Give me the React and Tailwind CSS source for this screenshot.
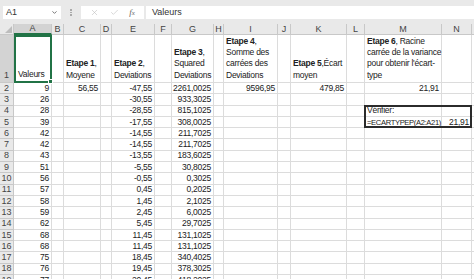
import { X, Check, ChevronDown } from "lucide-react";

const COLS = ["A", "B", "C", "D", "E", "F", "G", "H", "I", "J", "K", "L", "M", "N", ""];

const values = [
  ["9", "-47,55", "2261,0025"],
  ["26", "-30,55", "933,3025"],
  ["28", "-28,55", "815,1025"],
  ["39", "-17,55", "308,0025"],
  ["42", "-14,55", "211,7025"],
  ["42", "-14,55", "211,7025"],
  ["43", "-13,55", "183,6025"],
  ["51", "-5,55", "30,8025"],
  ["56", "-0,55", "0,3025"],
  ["57", "0,45", "0,2025"],
  ["58", "1,45", "2,1025"],
  ["59", "2,45", "6,0025"],
  ["62", "5,45", "29,7025"],
  ["68", "11,45", "131,1025"],
  ["68", "11,45", "131,1025"],
  ["75", "18,45", "340,4025"],
  ["76", "19,45", "378,3025"],
  ["77", "20,45", "418,2025"],
];

// row 1 texts, one entry per line: [bold part, normal part]
const header = {
  A: [["", "Valeurs"]],
  C: [["Etape 1", ","], ["", "Moyene"]],
  E: [["Etape 2", ","], ["", "Deviations"]],
  G: [["Etape 3", ","], ["", "Squared"], ["", "Deviations"]],
  I: [["Etape 4", ","], ["", "Somme des"], ["", "carrées des"], ["", "Deviations"]],
  K: [["Etape 5", ",Écart"], ["", "moyen"]],
  M: [
    ["Etape 6", ", Racine"],
    ["", "carrée de la variance"],
    ["", "pour obtenir l'écart-"],
    ["", "type"],
  ],
};

const Cell = ({ children, right, className = "" }) => (
  <div
    className={`border-r border-b border-[#dcdcdc] bg-white px-[2px] leading-[11px] whitespace-nowrap flex items-center ${
      right ? "justify-end" : ""
    } ${className}`}
  >
    {children}
  </div>
);

const RowHead = ({ n, active }) => (
  <div
    className={`border-r border-b border-[#c8c8c8] ${
      active ? "bg-[#d3d3d3] items-end pb-[2px]" : "bg-[#e9e9e9] items-center"
    } text-[#444] text-[9px] tracking-normal flex justify-center leading-none`}
  >
    {n}
  </div>
);

function row2Extra(col) {
  if (col === "C") return "56,55";
  if (col === "I") return "9596,95";
  if (col === "K") return "479,85";
  if (col === "M") return "21,91";
  return null;
}

export default function App() {
  return (
    <div
      className="w-[474px] h-[279px] overflow-hidden bg-[#e9e9e9] text-[#222] text-[8.5px] tracking-[-0.25px]"
      style={{ fontFamily: '"Liberation Sans", Arial, sans-serif' }}
    >
      {/* formula bar */}
      <div className="h-[24px] flex items-start pt-[6px] pl-[3px] gap-[2px] tracking-normal">
        <div className="w-[58px] h-[13px] bg-white flex items-center justify-between px-[3px] text-[9px] text-[#333]">
          <span>A1</span>
          <ChevronDown size={7} strokeWidth={3} className="text-[#666]" />
        </div>
        <div className="w-[16px] h-[13px] flex flex-col items-center justify-center gap-[1px]">
          <span className="w-[1.5px] h-[1.5px] bg-[#aaa]" />
          <span className="w-[1.5px] h-[1.5px] bg-[#aaa]" />
          <span className="w-[1.5px] h-[1.5px] bg-[#aaa]" />
        </div>
        <div className="w-[63px] h-[13px] bg-white flex items-center justify-around px-[4px] text-[#bbb]">
          <X size={9} strokeWidth={1.5} />
          <Check size={9} strokeWidth={1.5} />
          <span
            className="text-[9px] italic text-[#666]"
            style={{ fontFamily: '"Liberation Serif", serif' }}
          >
            f<span className="text-[7px]">x</span>
          </span>
        </div>
        <div className="flex-1 h-[13px] bg-white flex items-center pl-[6px] text-[9px] text-[#333]">
          Valeurs
        </div>
      </div>

      {/* sheet grid */}
      <div className="grid grid-cols-[14px_38px_12px_37px_11px_43px_17px_42px_10px_54px_13px_56px_18px_77px_30px_1fr] grid-rows-[11px_48px_repeat(18,11.3px)]">
        {/* corner */}
        <div className="bg-[#e9e9e9] border-r border-b border-[#c8c8c8] relative">
          <div className="absolute right-[1px] bottom-[1px] w-0 h-0 border-l-[7px] border-l-transparent border-b-[7px] border-b-[#bdbdbd]" />
        </div>
        {COLS.map((c, i) => (
          <div
            key={"h" + i}
            className={`border-r border-[#c8c8c8] text-[#444] text-[9px] tracking-normal flex items-center justify-center leading-none ${
              c === "A"
                ? "bg-[#d3d3d3] border-b-2 border-b-[#217346]"
                : "bg-[#e9e9e9] border-b"
            }`}
          >
            {c}
          </div>
        ))}

        {/* row 1 */}
        <RowHead n="1" active />
        {COLS.map((c, i) => {
          const h = header[c];
          return (
            <div
              key={"r1" + i}
              className={`bg-white px-[2px] pb-[1px] leading-[11.3px] whitespace-nowrap flex flex-col justify-end ${
                c === "A"
                  ? "relative border-2 border-[#217346]"
                  : "border-r border-b border-[#dcdcdc]"
              }`}
            >
              {h &&
                h.map((l, j) => (
                  <div key={j}>
                    {l[0] && <b className="font-bold">{l[0]}</b>}
                    {l[1]}
                  </div>
                ))}
              {c === "A" && (
                <span className="absolute -right-[3px] -bottom-[3px] w-[5px] h-[5px] bg-[#217346] border border-white" />
              )}
            </div>
          );
        })}

        {/* data rows */}
        {values.map((v, r) => {
          const n = r + 2;
          return [
            <RowHead key={"rh" + n} n={n} />,
            ...COLS.map((c, i) => {
              let content = null;
              let right = true;
              if (c === "A") content = v[0];
              else if (c === "E") content = v[1];
              else if (c === "G") content = v[2];
              else if (n === 2) content = row2Extra(c);
              if (n === 4 && c === "M") {
                right = false;
                content = (
                  <>
                    Vérifier:
                    {/* box around M4:N5 */}
                    <span className="absolute left-[-1px] top-[-1px] w-[108px] h-[23.6px] border-2 border-[#2b2b2b] pointer-events-none" />
                  </>
                );
              }
              if (n === 5 && c === "M") {
                content = (
                  <span className="text-[7.6px] tracking-[-0.35px]">=ECARTYPEP(A2:A21)</span>
                );
                right = false;
              }
              if (n === 5 && c === "N") content = "21,91";
              return (
                <Cell
                  key={n + "-" + i}
                  right={right}
                  className={n === 4 && c === "M" ? "relative" : ""}
                >
                  {content}
                </Cell>
              );
            }),
          ];
        })}
      </div>
    </div>
  );
}
